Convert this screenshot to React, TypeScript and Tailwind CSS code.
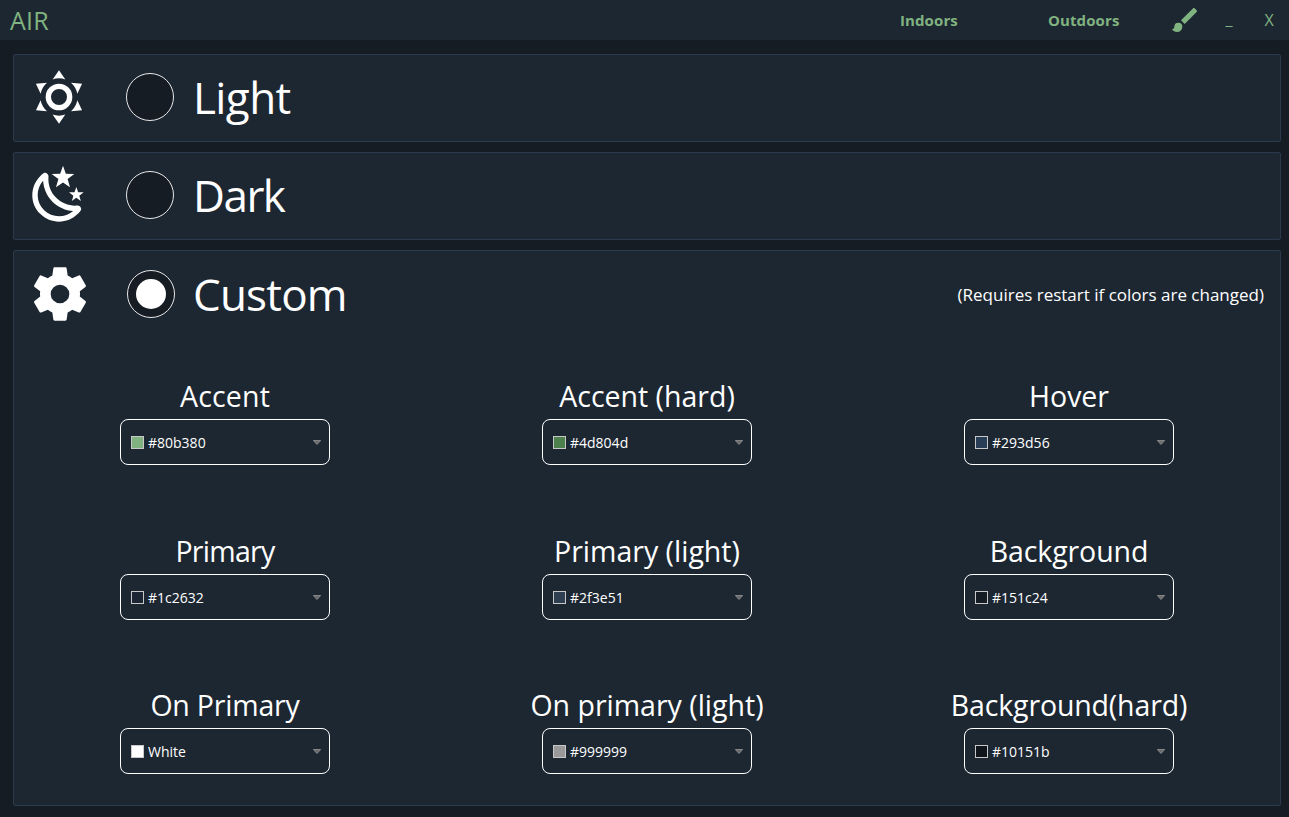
import type { ReactNode } from 'react';

const SUN =
  'M12,7A5,5 0 0,1 17,12A5,5 0 0,1 12,17A5,5 0 0,1 7,12A5,5 0 0,1 12,7M12,9A3,3 0 0,0 9,12A3,3 0 0,0 12,15A3,3 0 0,0 15,12A3,3 0 0,0 12,9M12,2L14.39,5.42C13.65,5.15 12.84,5 12,5C11.16,5 10.35,5.15 9.61,5.42L12,2M3.34,7L7.5,6.65C6.9,7.16 6.36,7.78 5.94,8.5C5.5,9.24 5.25,10 5.11,10.79L3.34,7M3.36,17L5.12,13.23C5.26,14 5.53,14.78 5.95,15.5C6.37,16.24 6.91,16.86 7.5,17.37L3.36,17M20.65,7L18.88,10.79C18.74,10 18.47,9.23 18.05,8.5C17.63,7.78 17.1,7.15 16.5,6.64L20.65,7M20.64,17L16.5,17.36C17.09,16.85 17.62,16.22 18.04,15.5C18.46,14.77 18.73,14 18.87,13.21L20.64,17M12,22L9.59,18.56C10.33,18.83 11.14,19 12,19C12.82,19 13.63,18.83 14.37,18.56L12,22Z';
const MOON =
  'M17.75,4.09L15.22,6.03L16.13,9.09L13.5,7.28L10.87,9.09L11.78,6.03L9.25,4.09L12.44,4L13.5,1L14.56,4L17.75,4.09M21.25,11L19.61,12.25L20.2,14.23L18.5,13.06L16.8,14.23L17.39,12.25L15.75,11L17.81,10.95L18.5,9L19.19,10.95L21.25,11M18.97,15.95C19.8,15.87 20.69,17.05 20.16,17.8C19.84,18.25 19.5,18.67 19.08,19.07C15.17,23 8.84,23 4.94,19.07C1.03,15.17 1.03,8.83 4.94,4.93C5.34,4.53 5.76,4.17 6.21,3.85C6.96,3.32 8.14,4.21 8.06,5.04C7.79,7.9 8.75,10.87 10.95,13.06C13.14,15.26 16.1,16.22 18.97,15.95M17.33,17.97C14.5,17.81 11.7,16.64 9.53,14.5C7.36,12.31 6.2,9.5 6.04,6.68C3.23,9.82 3.34,14.64 6.35,17.66C9.37,20.67 14.19,20.78 17.33,17.97Z';
const COG =
  'M12,15.5A3.5,3.5 0 0,1 8.5,12A3.5,3.5 0 0,1 12,8.5A3.5,3.5 0 0,1 15.5,12A3.5,3.5 0 0,1 12,15.5M19.43,12.97C19.47,12.65 19.5,12.33 19.5,12C19.5,11.67 19.47,11.34 19.43,11L21.54,9.37C21.73,9.22 21.78,8.95 21.66,8.73L19.66,5.27C19.54,5.05 19.27,4.96 19.05,5.05L16.56,6.05C16.04,5.66 15.5,5.32 14.87,5.07L14.5,2.42C14.46,2.18 14.25,2 14,2H10C9.75,2 9.54,2.18 9.5,2.42L9.13,5.07C8.5,5.32 7.96,5.66 7.44,6.05L4.95,5.05C4.73,4.96 4.46,5.05 4.34,5.27L2.34,8.73C2.21,8.95 2.27,9.22 2.46,9.37L4.57,11C4.53,11.34 4.5,11.67 4.5,12C4.5,12.33 4.53,12.65 4.57,12.97L2.46,14.63C2.27,14.78 2.21,15.05 2.34,15.27L4.34,18.73C4.46,18.95 4.73,19.03 4.95,18.95L7.44,17.94C7.96,18.34 8.5,18.68 9.13,18.93L9.5,21.58C9.54,21.82 9.75,22 10,22H14C14.25,22 14.46,21.82 14.5,21.58L14.87,18.93C15.5,18.67 16.04,18.34 16.56,17.94L19.05,18.95C19.27,19.03 19.54,18.95 19.66,18.73L21.66,15.27C21.78,15.05 21.73,14.78 21.54,14.63L19.43,12.97Z';
const BRUSH =
  'M20.71,4.63L19.37,3.29C19,2.9 18.35,2.9 17.96,3.29L9,12.25L11.75,15L20.71,6.04C21.1,5.65 21.1,5 20.71,4.63M7,14A3,3 0 0,0 4,17C4,18.31 2.84,19 2,19C2.92,20.22 4.5,21 6,21A4,4 0 0,0 10,17A3,3 0 0,0 7,14Z';

function Icon({ path, className }: { path: string; className: string }) {
  return (
    <svg viewBox="0 0 24 24" fill="currentColor" fillRule="evenodd" className={`shrink-0 ${className}`}>
      <path d={path} />
    </svg>
  );
}

const COLORS = [
  { label: 'Accent', value: '#80b380', swatch: 'bg-[#80b380]', spacing: 'tracking-[0.2px]' },
  { label: 'Accent (hard)', value: '#4d804d', swatch: 'bg-[#4d804d]', spacing: 'tracking-[0px]' },
  { label: 'Hover', value: '#293d56', swatch: 'bg-[#293d56]', spacing: 'tracking-[0px]' },
  { label: 'Primary', value: '#1c2632', swatch: 'bg-[#1c2632]', spacing: 'tracking-[-0.7px]' },
  { label: 'Primary (light)', value: '#2f3e51', swatch: 'bg-[#2f3e51]', spacing: 'tracking-[0px]' },
  { label: 'Background', value: '#151c24', swatch: 'bg-[#151c24]', spacing: 'tracking-[-0.1px]' },
  { label: 'On Primary', value: 'White', swatch: 'bg-white', spacing: 'tracking-[-0.2px]' },
  { label: 'On primary (light)', value: '#999999', swatch: 'bg-[#999999]', spacing: 'tracking-[0px]' },
  { label: 'Background(hard)', value: '#10151b', swatch: 'bg-[#10151b]', spacing: 'tracking-[-0.15px]' },
];

function Radio({ checked = false }: { checked?: boolean }) {
  return (
    <span className="flex size-12 shrink-0 items-center justify-center rounded-full border border-[#e8e9ea] bg-[#161c24]">
      {checked && <span className="size-[30px] rounded-full bg-white" />}
    </span>
  );
}

function Panel({ className, children }: { className: string; children: ReactNode }) {
  return <section className={`rounded-[2px] border border-[#2a394b] bg-[#1d2732] ${className}`}>{children}</section>;
}

function ColorPicker({ label, value, swatch, spacing }: (typeof COLORS)[number]) {
  return (
    <div className="flex flex-col items-center pt-[35px]">
      <div className={`h-[43px] whitespace-nowrap text-[28.5px] leading-[40px] ${spacing}`}>{label}</div>
      <button className="flex h-[46px] w-[210px] items-center rounded-[8px] border border-white pr-2 pl-2.5 text-left">
        <span className={`size-[13px] border border-[#c8c8c8] ${swatch}`} />
        <span className="ml-1 grow pt-px text-[14px] leading-[20px]">{value}</span>
        <svg viewBox="0 0 8 5" className="h-[5px] w-2">
          <path d="M0.3 0.5H7.7L4 4.5Z" fill="#6b6b6b" stroke="#a0a0a0" strokeWidth="0.7" />
        </svg>
      </button>
    </div>
  );
}

export default function App() {
  return (
    <div className="flex h-[817px] w-[1289px] flex-col overflow-hidden bg-[#161c24] font-['Open_Sans','Noto_Sans',sans-serif] text-white">
      <header className="flex h-10 shrink-0 items-center bg-[#1d2732] text-[#80b380]">
        <h1 className="grow pl-2.5 text-[25px] leading-[38px] tracking-[0.2px]">AIR</h1>
        <nav className="flex items-center text-[15px] leading-[40px] font-bold tracking-[0.1px]">
          <a className="w-[148px]">Indoors</a>
          <a className="w-[121px]">Outdoors</a>
        </nav>
        <Icon path={BRUSH} className="size-8" />
        <button className="ml-6 w-2 pb-0.5 text-[16px] leading-[38px]">_</button>
        <button className="mr-[15px] ml-[31px] w-[10px] text-[16px] leading-[40px]">X</button>
      </header>

      <main className="flex flex-col gap-2.5 pt-3.5 pr-2 pl-[13px]">
        <Panel className="flex h-[88px] items-center pb-0.5 pl-[13px]">
          <Icon path={SUN} className="size-16" />
          <span className="ml-[35px] flex">
            <Radio />
          </span>
          <span className="ml-[19px] text-[44px] leading-[60px] tracking-[-0.6px]">Light</span>
        </Panel>
        <Panel className="flex h-[88px] items-center pb-0.5 pl-[13px]">
          <Icon path={MOON} className="size-16" />
          <span className="ml-[35px] flex">
            <Radio />
          </span>
          <span className="ml-[19px] text-[44px] leading-[60px] tracking-[-1.5px]">Dark</span>
        </Panel>
        <Panel className="h-[556px]">
          <div className="flex h-[90px] items-center pr-4 pl-3.5 pb-1">
            <Icon path={COG} className="size-16" />
            <span className="ml-[35px] flex">
              <Radio checked />
            </span>
            <span className="ml-[18px] grow text-[44px] leading-[60px] tracking-[-0.8px]">Custom</span>
            <span className="pt-px text-[17px] leading-6">(Requires restart if colors are changed)</span>
          </div>
          <div className="grid h-[464px] grid-cols-3 grid-rows-[155px_154px_155px]">
            {COLORS.map((color) => (
              <ColorPicker key={color.label} {...color} />
            ))}
          </div>
        </Panel>
      </main>
    </div>
  );
}
